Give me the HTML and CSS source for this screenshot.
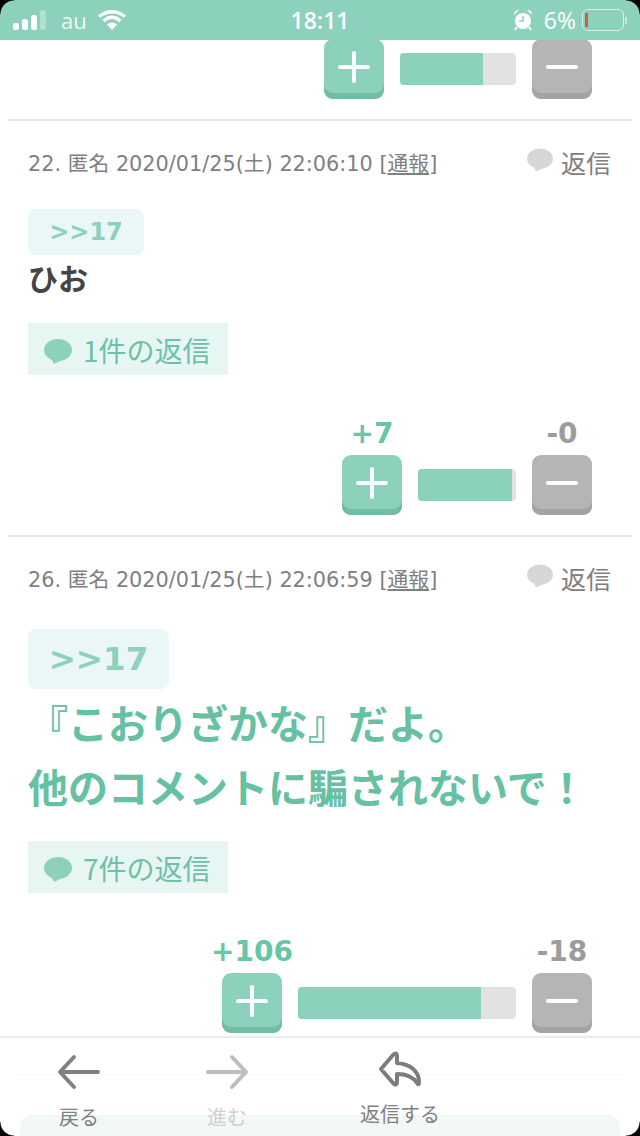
FILE: index.html
```html
<!DOCTYPE html>
<html>
<head lang="ja">
    <meta charset="UTF-8">
    <title>コメント</title>
    <link rel="stylesheet" href="styles.css">
</head>
<body>
<svg class="defs" width="0" height="0">
    <symbol id="bubble" viewBox="0 0 28 25">
        <ellipse cx="14" cy="11" rx="14" ry="11"></ellipse>
        <path d="M7 19 L10 25 L20 20 Z"></path>
    </symbol>
    <symbol id="plus" viewBox="0 0 32 32">
        <path d="M2 16 H30 M16 2 V30" fill="none" stroke="#fff" stroke-width="4" stroke-linecap="round"></path>
    </symbol>
    <symbol id="minus" viewBox="0 0 32 32">
        <path d="M2 16 H30" fill="none" stroke="#fff" stroke-width="4" stroke-linecap="round"></path>
    </symbol>
</svg>

<div id="page">
    <div id="status">
        <div class="status-left">
            <svg class="signal" width="34" height="20" viewBox="0 0 34 20">
                <rect x="0" y="13" width="6" height="7" rx="2" fill="#fff"></rect>
                <rect x="9" y="9" width="6" height="11" rx="2" fill="#fff"></rect>
                <rect x="18" y="5" width="6" height="15" rx="2" fill="#fff"></rect>
                <rect x="27" y="0" width="6" height="20" rx="2" fill="#fff" opacity=".3"></rect>
            </svg>
            <span class="carrier">au</span>
            <svg class="wifi" width="30" height="20" viewBox="0 0 30 20">
                <path d="M15 20 L10 14.5 Q15 10.5 20 14.5 Z" fill="#fff"></path>
                <path d="M6.5 11 Q15 3.5 23.5 11" fill="none" stroke="#fff" stroke-width="3.4"></path>
                <path d="M2 6.5 Q15 -3 28 6.5" fill="none" stroke="#fff" stroke-width="3.4"></path>
            </svg>
        </div>
        <div class="status-time">18:11</div>
        <div class="status-right">
            <svg class="alarm" width="20" height="22" viewBox="0 0 20 22">
                <circle cx="10" cy="12" r="8" fill="#fff"></circle>
                <path d="M10 7 V12 H6" fill="none" stroke="#8cd1bc" stroke-width="1.6"></path>
                <path d="M1 6 Q1 1 6 1 Z M19 6 Q19 1 14 1 Z" fill="#fff"></path>
                <path d="M4 18 L2 21 M16 18 L18 21" stroke="#fff" stroke-width="2"></path>
            </svg>
            <span class="percent">6%</span>
            <div class="battery"><div class="battery-fill"></div></div>
            <div class="battery-nub"></div>
        </div>
    </div>

    <div id="list">
        <div class="votes votes-first">
            <div class="vote">
                <div class="btn btn-plus"><svg width="32" height="32"><use href="#plus"></use></svg></div>
            </div>
            <div class="bar" style="width: 116px"><div class="bar-fill" style="width: 83px"></div></div>
            <div class="vote">
                <div class="btn btn-minus"><svg width="32" height="32"><use href="#minus"></use></svg></div>
            </div>
        </div>

        <div class="comment">
            <div class="meta">
                <span class="meta-text">22. 匿名 2020/01/25(土) 22:06:10 [<u>通報</u>]</span>
                <span class="reply"><svg width="26" height="24"><use href="#bubble"></use></svg>返信</span>
            </div>
            <div class="anchor">&gt;&gt;17</div>
            <div class="body">ひお</div>
            <div class="replies"><svg width="28" height="25"><use href="#bubble"></use></svg>1件の返信</div>
            <div class="votes">
                <div class="vote">
                    <div class="count count-plus">+7</div>
                    <div class="btn btn-plus"><svg width="32" height="32"><use href="#plus"></use></svg></div>
                </div>
                <div class="bar" style="width: 98px"><div class="bar-fill" style="width: 94px"></div></div>
                <div class="vote">
                    <div class="count count-minus">-0</div>
                    <div class="btn btn-minus"><svg width="32" height="32"><use href="#minus"></use></svg></div>
                </div>
            </div>
        </div>

        <div class="comment comment-big">
            <div class="meta">
                <span class="meta-text">26. 匿名 2020/01/25(土) 22:06:59 [<u>通報</u>]</span>
                <span class="reply"><svg width="26" height="24"><use href="#bubble"></use></svg>返信</span>
            </div>
            <div class="anchor">&gt;&gt;17</div>
            <div class="body">『こおりざかな』だよ。<br>他のコメントに騙されないで！</div>
            <div class="replies"><svg width="28" height="25"><use href="#bubble"></use></svg>7件の返信</div>
            <div class="votes">
                <div class="vote">
                    <div class="count count-plus">+106</div>
                    <div class="btn btn-plus"><svg width="32" height="32"><use href="#plus"></use></svg></div>
                </div>
                <div class="bar" style="width: 218px"><div class="bar-fill" style="width: 183px"></div></div>
                <div class="vote">
                    <div class="count count-minus">-18</div>
                    <div class="btn btn-minus"><svg width="32" height="32"><use href="#minus"></use></svg></div>
                </div>
            </div>
        </div>
    </div>

    <div id="nav">
        <div class="nav-line"></div>
        <div class="nav-pale"></div>
        <div class="nav-item">
            <svg width="44" height="36" viewBox="0 0 44 36">
                <path d="M41 18 H4 M17 3 L3 18 L17 33" fill="none" stroke="#808080" stroke-width="4" stroke-linecap="round" stroke-linejoin="round"></path>
            </svg>
            <span>戻る</span>
        </div>
        <div class="nav-item nav-off">
            <svg width="44" height="36" viewBox="0 0 44 36">
                <path d="M3 18 H40 M27 3 L41 18 L27 33" fill="none" stroke="#bdbdbd" stroke-width="4" stroke-linecap="round" stroke-linejoin="round"></path>
            </svg>
            <span>進む</span>
        </div>
        <div class="nav-item nav-send">
            <svg width="44" height="38" viewBox="0 0 44 38">
                <path d="M3 19 L15 5 Q19 1 19 7 V13 C32 14 41 21 41 32 Q41 36 39 33 C35 27 28 24 19 24 V31 Q19 37 15 33 Z" fill="none" stroke="#7d7d7d" stroke-width="4" stroke-linejoin="round"></path>
            </svg>
            <span>返信する</span>
        </div>
    </div>

    <div class="corner corner-tl"></div>
    <div class="corner corner-tr"></div>
    <div class="corner corner-bl"></div>
    <div class="corner corner-br"></div>
</div>
</body>
</html>
```

FILE: styles.css
```css
* {
    margin: 0;
    padding: 0;
    box-sizing: border-box;
}

body {
    background: #fff;
    font-family: "DejaVu Sans", "Noto Sans CJK JP", sans-serif;
}

u {
    text-underline-offset: 2px;
}

.defs {
    position: absolute;
}

#page {
    width: 640px;
    height: 1136px;
    position: relative;
    overflow: hidden;
}

/* status bar */
#status {
    height: 40px;
    background: #8cd1bc;
    position: relative;
    z-index: 2;
    display: grid;
    grid-template-columns: 1fr auto 1fr;
    align-items: center;
    color: #fff;
    font-family: "Open Sans", sans-serif;
    font-size: 22px;
}

.status-left {
    display: flex;
    align-items: center;
    padding-left: 13px;
}

.signal {
    margin-right: 14px;
}

.carrier {
    margin-right: 10px;
    opacity: .85;
}

.status-time {
    font-weight: 600;
    font-size: 23px;
}

.status-right {
    display: flex;
    align-items: center;
    justify-content: flex-end;
    padding-right: 13px;
}

.alarm {
    margin-right: 11px;
}

.percent {
    margin-right: 6px;
    font-size: 23px;
}

.battery {
    width: 42px;
    height: 22px;
    border: 1.5px solid rgba(255, 255, 255, .65);
    border-radius: 6px;
    padding: 3px 2px;
}

.battery-fill {
    width: 3px;
    height: 100%;
    background: #c8604a;
}

.battery-nub {
    width: 2px;
    height: 7px;
    margin-left: 1px;
    background: rgba(255, 255, 255, .5);
}

/* comments */
#list {
    margin-top: -1px;
}

.comment {
    margin: 0 8px;
    padding: 0 20px;
    border-top: 2px solid #e6e6e6;
}

.meta {
    height: 54px;
    margin-top: 14px;
    display: flex;
    justify-content: space-between;
    align-items: center;
    color: #808080;
}

.meta-text {
    font-size: 20.8px;
}

.reply {
    display: flex;
    align-items: center;
    font-size: 25px;
    margin-right: 1px;
}

.reply svg {
    fill: #d6d6d6;
    margin-right: 8px;
    margin-top: -4px;
}

.anchor {
    width: 116px;
    height: 46px;
    margin-top: 20px;
    background: #ebf6f6;
    border-radius: 8px;
    color: #8cd1bc;
    font-size: 24px;
    font-weight: bold;
    line-height: 46px;
    text-align: center;
}

.body {
    margin-top: 4px;
    height: 60px;
    color: #444;
    font-family: "Noto Sans CJK JP", sans-serif;
    font-size: 30px;
    font-weight: bold;
    line-height: 36px;
}

.replies {
    width: 200px;
    height: 52px;
    margin-top: 4px;
    padding-left: 16px;
    padding-top: 2px;
    background: #e8f6f3;
    display: flex;
    align-items: center;
    color: #6cc1a8;
    font-family: "Noto Sans CJK JP", sans-serif;
    font-size: 28px;
}

.replies svg {
    fill: #8cd1bc;
    margin-right: 11px;
    margin-top: 2px;
}

.votes {
    margin-top: 44px;
    margin-bottom: 20px;
    padding-right: 20px;
    display: flex;
    justify-content: flex-end;
    align-items: flex-end;
    gap: 16px;
}

.votes-first {
    margin: 0 48px 20px 0;
    padding: 0;
}

.vote {
    width: 60px;
    display: flex;
    flex-direction: column;
    align-items: center;
}

.count {
    height: 36px;
    font-size: 28px;
    font-weight: bold;
    line-height: 30px;
    white-space: nowrap;
}

.count-plus {
    color: #66c6a6;
}

.count-minus {
    color: #9c9c9c;
}

.btn {
    width: 60px;
    height: 60px;
    border-radius: 9px;
    display: flex;
    justify-content: center;
    align-items: center;
    padding-bottom: 4px;
}

.btn-plus {
    background: #8cd1bc;
    box-shadow: inset 0 -6px 0 #72bba4;
}

.btn-minus {
    background: #b5b5b5;
    box-shadow: inset 0 -6px 0 #a3a3a3;
}

.bar {
    height: 32px;
    margin-bottom: 14px;
    background: #e2e2e2;
    border-radius: 4px;
    overflow: hidden;
}

.bar-fill {
    height: 100%;
    background: #8cd1bc;
}

/* the bigger comment */
.comment-big .anchor {
    width: 141px;
    height: 60px;
    margin-top: 24px;
    font-size: 32.5px;
    line-height: 60px;
}

.comment-big .body {
    height: auto;
    color: #66c0a2;
    font-size: 40px;
    line-height: 64px;
    margin-top: 1px;
    white-space: nowrap;
}

.comment-big .replies {
    margin-top: 23px;
}

.comment-big .votes {
    margin-top: 44px;
}

/* bottom bar */
#nav {
    position: absolute;
    left: 0;
    right: 0;
    bottom: 0;
    height: 100px;
    background: #fff;
    border-top: 2px solid #ebebeb;
    display: flex;
    padding-left: 29px;
    z-index: 1;
}

.nav-line {
    position: absolute;
    left: 16px;
    right: 16px;
    top: 36px;
    height: 1px;
    background: #f8f8f8;
}

.nav-pale {
    position: absolute;
    left: 20px;
    right: 20px;
    top: 77px;
    height: 40px;
    background: #f1f8f6;
    border-radius: 12px;
}

.nav-item {
    width: 100px;
    margin-right: 48px;
    padding-top: 16px;
    position: relative;
    display: flex;
    flex-direction: column;
    align-items: center;
    color: #808080;
    font-family: "Noto Sans CJK JP", sans-serif;
    font-size: 20px;
    line-height: 28px;
}

.nav-item span {
    margin-top: 13px;
}

.nav-off {
    color: #d0d0d0;
    margin-right: 73px;
}

.nav-send {
    padding-top: 12px;
}

.nav-send span {
    margin-top: 12px;
}

/* rounded screen corners */
.corner {
    position: absolute;
    width: 14px;
    height: 14px;
    z-index: 3;
}

.corner-tl {
    top: 0;
    left: 0;
    background: radial-gradient(circle at 100% 100%, transparent 13px, #000 14px);
}

.corner-tr {
    top: 0;
    right: 0;
    background: radial-gradient(circle at 0 100%, transparent 13px, #000 14px);
}

.corner-bl {
    bottom: 0;
    left: 0;
    background: radial-gradient(circle at 100% 0, transparent 13px, #000 14px);
}

.corner-br {
    bottom: 0;
    right: 0;
    background: radial-gradient(circle at 0 0, transparent 13px, #000 14px);
}
```
